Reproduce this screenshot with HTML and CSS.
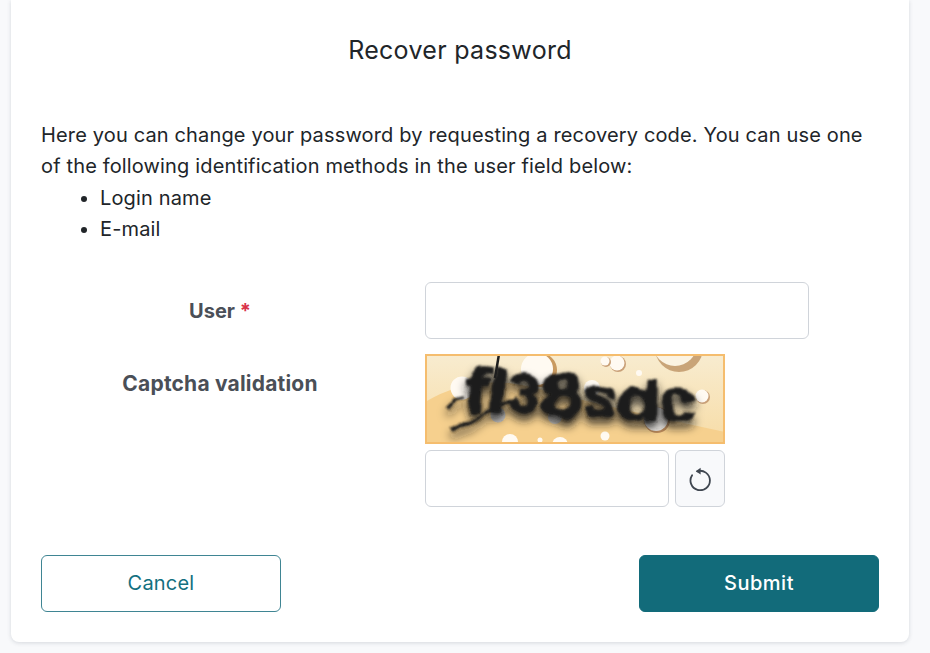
FILE: index.html
```html
<!DOCTYPE html>
<html lang="en">
<head>
<meta charset="utf-8">
<title>Recover password</title>
<link rel="stylesheet" href="styles.css">
</head>
<body>
<main class="card">
  <h1 class="title">Recover password</h1>
  <div class="intro">
    <p>Here you can change your password by requesting a recovery code. You can use one<br>of the following identification methods in the user field below:</p>
    <ul>
      <li>Login name</li>
      <li>E-mail</li>
    </ul>
  </div>
  <form class="form">
    <label class="label label-user" for="user">User <span class="req">*</span></label>
    <input class="input" id="user" type="text">
    <label class="label label-captcha" for="captcha">Captcha validation</label>
    <div class="captcha">
      <svg class="captcha-img" width="300" height="90" viewBox="0 0 300 90" aria-hidden="true">
        <defs>
          <linearGradient id="sky" x1="0" y1="0" x2="0" y2="1">
            <stop offset="0" stop-color="#f8ecd0"/>
            <stop offset="1" stop-color="#f7dca6"/>
          </linearGradient>
          <filter id="warp" x="-10%" y="-40%" width="120%" height="190%">
            <feTurbulence type="fractalNoise" baseFrequency="0.03" numOctaves="2" seed="4" result="noise"/>
            <feDisplacementMap in="SourceGraphic" in2="noise" scale="16" xChannelSelector="R" yChannelSelector="G" result="bent"/>
            <feGaussianBlur in="bent" stdDeviation="0.8" result="ink"/>
            <feGaussianBlur in="bent" stdDeviation="5" result="blur"/>
            <feOffset in="blur" dy="6" result="drop"/>
            <feMerge><feMergeNode in="drop"/><feMergeNode in="ink"/></feMerge>
          </filter>
        </defs>
        <rect width="300" height="90" fill="url(#sky)"/>
        <path d="M0 48Q50 18 110 34T300 78V90H0Z" fill="#f6d08e"/>
        <circle cx="254" cy="-6" r="24" fill="#c9a478"/><circle cx="250" cy="-10" r="22" fill="#fbf3e2"/>
        <circle cx="115" cy="16" r="17" fill="#c99a60"/><circle cx="112" cy="15" r="16" fill="#fffaf2"/>
        <circle cx="193" cy="10" r="8" fill="#c9a078"/><circle cx="192" cy="9" r="7.5" fill="#fffaf2"/>
        <circle cx="181" cy="8" r="5" fill="#c9a078"/><circle cx="180" cy="7" r="4.5" fill="#fffaf2"/>
        <circle cx="278" cy="43" r="7" fill="#c9a078"/><circle cx="277" cy="42" r="6.5" fill="#fffaf2"/>
        <circle cx="37" cy="34" r="11.5" fill="#fffaf2"/>
        <circle cx="167" cy="34" r="8" fill="#fffaf2"/>
        <circle cx="232" cy="66" r="13" fill="#b9895a"/><circle cx="231" cy="65" r="12" fill="#e9e6e2"/>
        <circle cx="85" cy="88" r="8" fill="#fffaf2"/>
        <circle cx="180" cy="82" r="4.5" fill="#fffaf2"/>
        <circle cx="135" cy="91" r="8" fill="#fffaf2"/>
        <circle cx="73" cy="61" r="7.5" fill="#c4c2c0"/>
        <circle cx="130" cy="63" r="7" fill="#d0cdc8"/>
        <circle cx="214" cy="19" r="3" fill="#fffaf2"/>
        <circle cx="115" cy="86" r="2.5" fill="#fffaf2"/>
        <g filter="url(#warp)">
          <text class="captcha-text" x="40" y="62" textLength="232" lengthAdjust="spacingAndGlyphs" transform="rotate(3 150 45)">fl38sdc</text>
          <path d="M24 76 91 45M24 56 29 45 40 43" fill="none" stroke="#1d1d1d" stroke-width="3.5"/>
        </g>
        <path d="M74 0 70 24" fill="none" stroke="#1d1d1d" stroke-width="2.5"/>
      </svg>
      <div class="captcha-row">
        <input class="input input-captcha" id="captcha" type="text">
        <button class="refresh" type="button" aria-label="Reload captcha">
          <svg width="24" height="24" viewBox="0 0 24 24" fill="none" aria-hidden="true">
            <path d="M9.2 4.3A9.7 9.7 0 1 1 4.1 8.2" stroke="#3f4650" stroke-width="1.8" stroke-linecap="round"/>
            <path d="M12.6 0.8V7.6L7.8 4.2Z" fill="#3f4650"/>
          </svg>
        </button>
      </div>
    </div>
    <div class="actions">
      <button class="btn btn-outline" type="button">Cancel</button>
      <button class="btn btn-solid" type="button">Submit</button>
    </div>
  </form>
</main>
</body>
</html>
```

FILE: styles.css
```css
* { box-sizing: border-box; }
html, body { margin: 0; height: 100%; }
body {
  background: #f8f9fb;
  color: #212529;
  font-family: Inter, "Open Sans", sans-serif;
  font-size: 20px;
  letter-spacing: 0.15px;
  overflow: hidden;
}
.card {
  width: 898px;
  height: 642px;
  margin-left: 11px;
  padding: 0 30px;
  background: #fff;
  border-radius: 0 0 8px 8px;
  box-shadow: 0 1px 4px rgba(60, 70, 90, 0.18);
}
.title {
  margin: 0;
  padding-top: 35px;
  height: 120px;
  font-size: 25px;
  line-height: 30px;
  font-weight: 400;
  letter-spacing: 0.3px;
  text-align: center;
}
.intro { line-height: 31px; }
.intro p { margin: 0; }
.intro ul { margin: 1px 0 0; padding-left: 59px; }
.form {
  display: grid;
  grid-template-columns: 358px 384px;
  column-gap: 26px;
  row-gap: 15px;
  margin-top: 37px;
}
.label {
  text-align: center;
  font-weight: 700;
  color: #4a4f57;
  font-size: 20px;
  line-height: 31px;
  letter-spacing: 0;
}
.label-user { padding-top: 14px; }
.label-captcha {
  padding-top: 14px;
  font-size: 21px;
  letter-spacing: 0.2px;
}
.req { color: #d9324a; }
.input {
  display: block;
  width: 100%;
  height: 57px;
  padding: 0 12px;
  background: #fff;
  border: 1px solid #d0d4da;
  border-radius: 6px;
  font: inherit;
}
.captcha { width: 300px; }
.captcha-img {
  display: block;
  width: 300px;
  height: 90px;
  outline: 2px solid #f5bd6e;
  outline-offset: -2px;
}
.captcha-text {
  font-family: "Liberation Sans", sans-serif;
  font-weight: 700;
  font-size: 58px;
  fill: #1d1d1d;
  stroke: #1d1d1d;
  stroke-width: 1.8px;
}
.captcha-row {
  display: flex;
  gap: 6px;
  margin-top: 6px;
}
.input-captcha { width: 244px; }
.refresh {
  display: flex;
  align-items: center;
  justify-content: center;
  width: 50px;
  height: 57px;
  padding: 0;
  background: #f8f9fb;
  border: 1px solid #d0d4da;
  border-radius: 6px;
}
.actions {
  grid-column: 1 / -1;
  display: flex;
  justify-content: space-between;
  width: 838px;
  margin-top: 33px;
}
.btn {
  width: 240px;
  height: 57px;
  padding: 0 0 2px;
  border-radius: 6px;
  font: inherit;
  letter-spacing: 0.2px;
}
.btn-outline {
  background: #fff;
  border: 1px solid #3f8593;
  color: #137080;
}
.btn-solid {
  background: #126b7a;
  border: 1px solid #126b7a;
  color: #fff;
  font-weight: 500;
  letter-spacing: 0.5px;
}
```
